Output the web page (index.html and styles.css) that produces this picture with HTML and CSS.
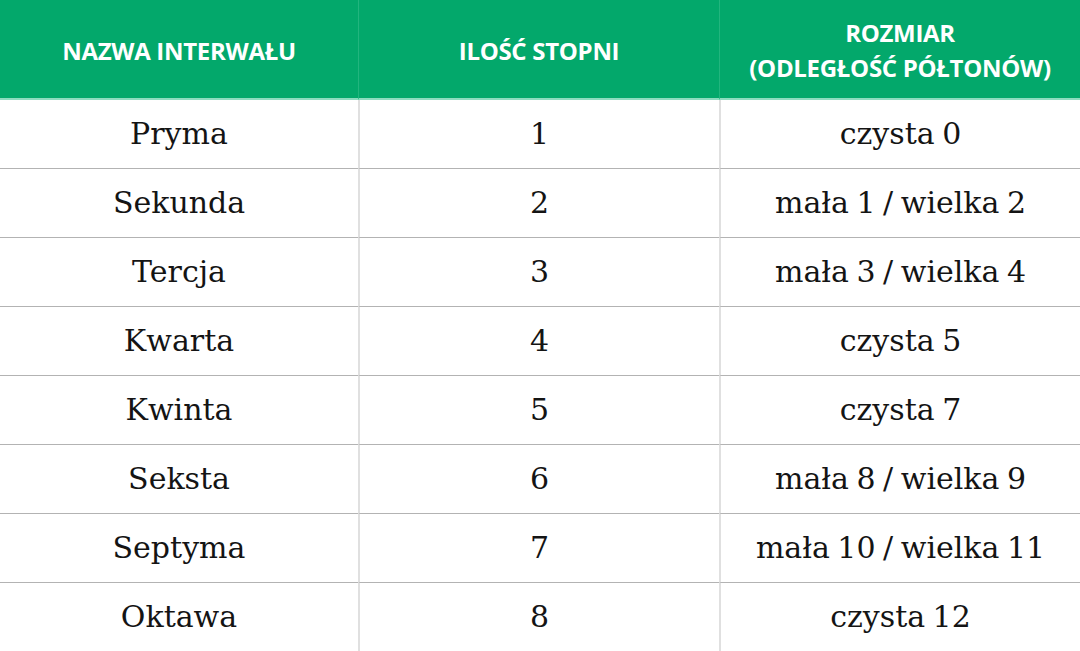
FILE: index.html
```html
<!DOCTYPE html>
<html lang="pl">
<head>
<meta charset="utf-8">
<title>Interwały</title>
<link rel="stylesheet" href="styles.css">
</head>
<body>
<div class="table">
  <div class="th">NAZWA INTERWAŁU</div>
  <div class="th">ILOŚĆ STOPNI</div>
  <div class="th">ROZMIAR<br>(ODLEGŁOŚĆ PÓŁTONÓW)</div>

  <div class="td">Pryma</div><div class="td">1</div><div class="td">czysta 0</div>
  <div class="td">Sekunda</div><div class="td">2</div><div class="td">mała 1 / wielka 2</div>
  <div class="td">Tercja</div><div class="td">3</div><div class="td">mała 3 / wielka 4</div>
  <div class="td">Kwarta</div><div class="td">4</div><div class="td">czysta 5</div>
  <div class="td">Kwinta</div><div class="td">5</div><div class="td">czysta 7</div>
  <div class="td">Seksta</div><div class="td">6</div><div class="td">mała 8 / wielka 9</div>
  <div class="td">Septyma</div><div class="td">7</div><div class="td">mała 10 / wielka 11</div>
  <div class="td last">Oktawa</div><div class="td last">8</div><div class="td last">czysta 12</div>
</div>
</body>
</html>
```

FILE: styles.css
```css
html, body {
  margin: 0;
  padding: 0;
  background: #ffffff;
}
.table {
  width: 1080px;
  height: 651px;
  display: grid;
  grid-template-columns: 358px 361px 361px;
  grid-template-rows: 100px repeat(7, 69px) 68px;
  overflow: hidden;
}
.th {
  background: #03a86b;
  color: #ffffff;
  font-family: "Open Sans", "Liberation Sans", sans-serif;
  font-weight: 700;
  font-size: 24px;
  line-height: 35px;
  letter-spacing: -0.3px;
  display: flex;
  align-items: center;
  justify-content: center;
  text-align: center;
  border-bottom: 2px solid #8edcc0;
  border-left: 1px solid #22b57e;
  box-sizing: border-box;
  padding-top: 2px;
}
.th:first-child {
  border-left: none;
}
.td {
  font-family: "DejaVu Serif", "Liberation Serif", serif;
  font-size: 30px;
  word-spacing: -2px;
  color: #141414;
  display: flex;
  align-items: center;
  justify-content: center;
  border-bottom: 1px solid #b3b3b3;
  border-left: 2px solid #e0e0e0;
  box-sizing: border-box;
  padding-bottom: 2px;
}
.td:nth-child(3n+1) {
  border-left: none;
}
.td.last {
  border-bottom: none;
}
```
